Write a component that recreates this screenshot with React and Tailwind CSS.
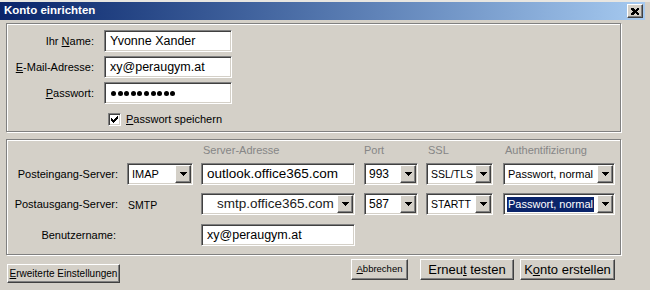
import React from "react";

const sunken =
  "border border-t-[#808080] border-l-[#808080] border-r-white border-b-white shadow-[inset_1px_1px_0_#404040,inset_-1px_-1px_0_#d4d0c8]";
const raised =
  "border border-t-white border-l-white border-r-[#404040] border-b-[#404040] shadow-[inset_-1px_-1px_0_#808080,inset_1px_1px_0_#d4d0c8] bg-[#d4d0c8]";
const etched = "border border-[#808080] shadow-[1px_1px_0_#fff,inset_1px_1px_0_#fff]";

const Arrow = () => (
  <div className={`${raised} w-[16px] h-[18px] shrink-0 flex items-center justify-center`}>
    <svg width="7" height="4" viewBox="0 0 7 4" shapeRendering="crispEdges">
      <path d="M0 0h7v1h-1v1h-1v1h-1v1h-1v-1h-1v-1h-1v-1h-1z" fill="#000" />
    </svg>
  </div>
);

const Select = ({ value, width, selected, textClass = "text-[11px]" }) => (
  <div className={`${sunken} bg-white h-[22px] flex items-center p-[1px] ${width}`}>
    <div className="flex-1 min-w-0 overflow-hidden h-full flex items-center pl-[2px] pr-[1px]">
      <span
        className={`${textClass} whitespace-nowrap leading-[15px] px-[1px] ${
          selected ? "bg-[#0a246a] text-white" : "text-black"
        }`}
      >
        {value}
      </span>
    </div>
    <Arrow />
  </div>
);

const Input = ({ children, width, textClass = "text-[12px]" }) => (
  <div className={`${sunken} bg-white h-[22px] flex items-center pl-[5px] ${width} ${textClass} text-black whitespace-nowrap overflow-hidden`}>
    {children}
  </div>
);

const Button = ({ children, className }) => (
  <button className={`${raised} flex items-center justify-center text-black ${className}`}>{children}</button>
);

const Row1 = ({ label, children }) => (
  <div className="flex items-center h-[22px]">
    <div className="w-[87px] text-right text-[11px] text-black">{label}</div>
    <div className="ml-[10px]">{children}</div>
  </div>
);

export default function App() {
  return (
    <div className="w-[650px] h-[290px] bg-[#d4d0c8] overflow-hidden font-['Liberation_Sans',Arial,sans-serif] border-t-2 border-t-[#e8e6e1]">
      {/* title bar */}
      <div className="w-[645px] h-[18px] flex items-center bg-gradient-to-r from-[#0a246a] to-[#a6caf0] pl-[4px] pr-[2px]">
        <span className="text-white font-bold text-[11.5px]">Konto einrichten</span>
        <div className={`${raised} ml-auto w-[16px] h-[14px] flex items-center justify-center`}>
          <svg width="8" height="7" viewBox="0 0 8 7" shapeRendering="crispEdges">
            <path d="M0 0h2l2 2 2-2h2v1l-2 2.5 2 2.5v1h-2l-2-2-2 2h-2v-1l2-2.5-2-2.5z" fill="#000" />
          </svg>
        </div>
      </div>

      <div className="pl-[6px]">
        {/* account group */}
        <div className={`${etched} mt-[3px] w-[615px] h-[109px] pt-[6px] flex flex-col gap-[4px]`}>
          <Row1 label={<>Ihr <u>N</u>ame:</>}>
            <Input width="w-[128px]" textClass="text-[12.5px]">Yvonne Xander</Input>
          </Row1>
          <Row1 label={<><u>E</u>-Mail-Adresse:</>}>
            <Input width="w-[128px]" textClass="text-[12.5px]">xy@peraugym.at</Input>
          </Row1>
          <Row1 label={<><u>P</u>asswort:</>}>
            <Input width="w-[128px]">
              <div className="flex gap-[1.6px] pl-[1px]">
                {Array.from({ length: 10 }).map((_, i) => (
                  <span key={i} className="w-[5px] h-[5px] rounded-full bg-black" />
                ))}
              </div>
            </Input>
          </Row1>
          <div className="flex items-center mt-[3px] ml-[101px]">
            <div className={`${sunken} bg-white w-[13px] h-[13px] flex items-center justify-center`}>
              <svg width="7" height="7" viewBox="0 0 7 7" shapeRendering="crispEdges">
                <path d="M6 0h1v3h-1v1h-1v1h-1v1h-1v1h-1v-1h-1v-1h-1v-3h1v1h1v1h1v-1h1v-1h1z" fill="#000" />
              </svg>
            </div>
            <span className="ml-[5px] text-[11px] text-black">
              <u>P</u>asswort speichern
            </span>
          </div>
        </div>

        {/* server group */}
        <div className={`${etched} mt-[7px] w-[615px] h-[116px] pl-[1px]`}>
          <div className="flex mt-[4px] leading-[13px] text-[11px] text-[#868686]">
            <div className="w-[110px]" />
            <div className="ml-[9px] w-[66px]" />
            <div className="ml-[8px] w-[154px] pl-[2px]">Server-Adresse</div>
            <div className="ml-[9px] w-[54px]">Port</div>
            <div className="ml-[8px] w-[67px] pl-[2px]">SSL</div>
            <div className="ml-[10px] w-[112px] pl-[2px]">Authentifizierung</div>
          </div>

          <div className="flex items-center h-[22px] mt-[6px]">
            <div className="w-[110px] text-right text-[11px] text-black">Posteingang-Server:</div>
            <div className="ml-[9px]">
              <Select value="IMAP" width="w-[66px]" textClass="text-[11px] font-medium" />
            </div>
            <div className="ml-[8px]">
              <Input width="w-[154px]" textClass="text-[13.5px] pl-[2px] text-[#202020]">outlook.office365.com</Input>
            </div>
            <div className="ml-[9px]">
              <Select value="993" width="w-[54px]" textClass="text-[12px]" />
            </div>
            <div className="ml-[8px]">
              <Select value="SSL/TLS" width="w-[67px]" textClass="text-[10.5px]" />
            </div>
            <div className="ml-[10px]">
              <Select value="Passwort, normal" width="w-[112px]" textClass="text-[11px]" />
            </div>
          </div>

          <div className="flex items-center h-[22px] mt-[8px]">
            <div className="w-[110px] text-right text-[11px] text-black">Postausgang-Server:</div>
            <div className="ml-[10px] w-[65px] text-[10.5px] text-black pt-[3px]">SMTP</div>
            <div className="ml-[8px]">
              <div className={`${sunken} bg-white h-[22px] w-[154px] flex items-center p-[1px]`}>
                <div className="flex-1 text-[13.5px] text-[#202020] pl-[14px] whitespace-nowrap overflow-hidden">
                  smtp.office365.com
                </div>
                <Arrow />
              </div>
            </div>
            <div className="ml-[9px]">
              <Select value="587" width="w-[54px]" textClass="text-[12px]" />
            </div>
            <div className="ml-[8px]">
              <Select value="STARTT" width="w-[67px]" textClass="text-[10.5px]" />
            </div>
            <div className="ml-[10px]">
              <Select value="Passwort, normal" width="w-[112px]" textClass="text-[11px]" selected />
            </div>
          </div>

          <div className="flex items-center h-[22px] mt-[9px]">
            <div className="w-[108px] text-right text-[11px] text-black">Benutzername:</div>
            <div className="ml-[85px]">
              <Input width="w-[154px]" textClass="text-[12.5px]">xy@peraugym.at</Input>
            </div>
          </div>
        </div>

        {/* buttons */}
        <div className="flex w-[615px] mt-[4px] items-start">
          <Button className="ml-[1px] mt-[5px] w-[113px] h-[19px] text-[10px]">
            <span><u>E</u>rweiterte Einstellungen</span>
          </Button>
          <div className="ml-auto mr-[6px] flex">
            <Button className="w-[57px] h-[21px] text-[9.5px]">
              <span><u>A</u>bbrechen</span>
            </Button>
            <Button className="ml-[12px] w-[94px] h-[21px] text-[13px]">
              <span>Erneu<u>t</u> testen</span>
            </Button>
            <Button className="ml-[6px] w-[95px] h-[21px] text-[13px]">
              <span>K<u>o</u>nto erstellen</span>
            </Button>
          </div>
        </div>
      </div>
    </div>
  );
}
